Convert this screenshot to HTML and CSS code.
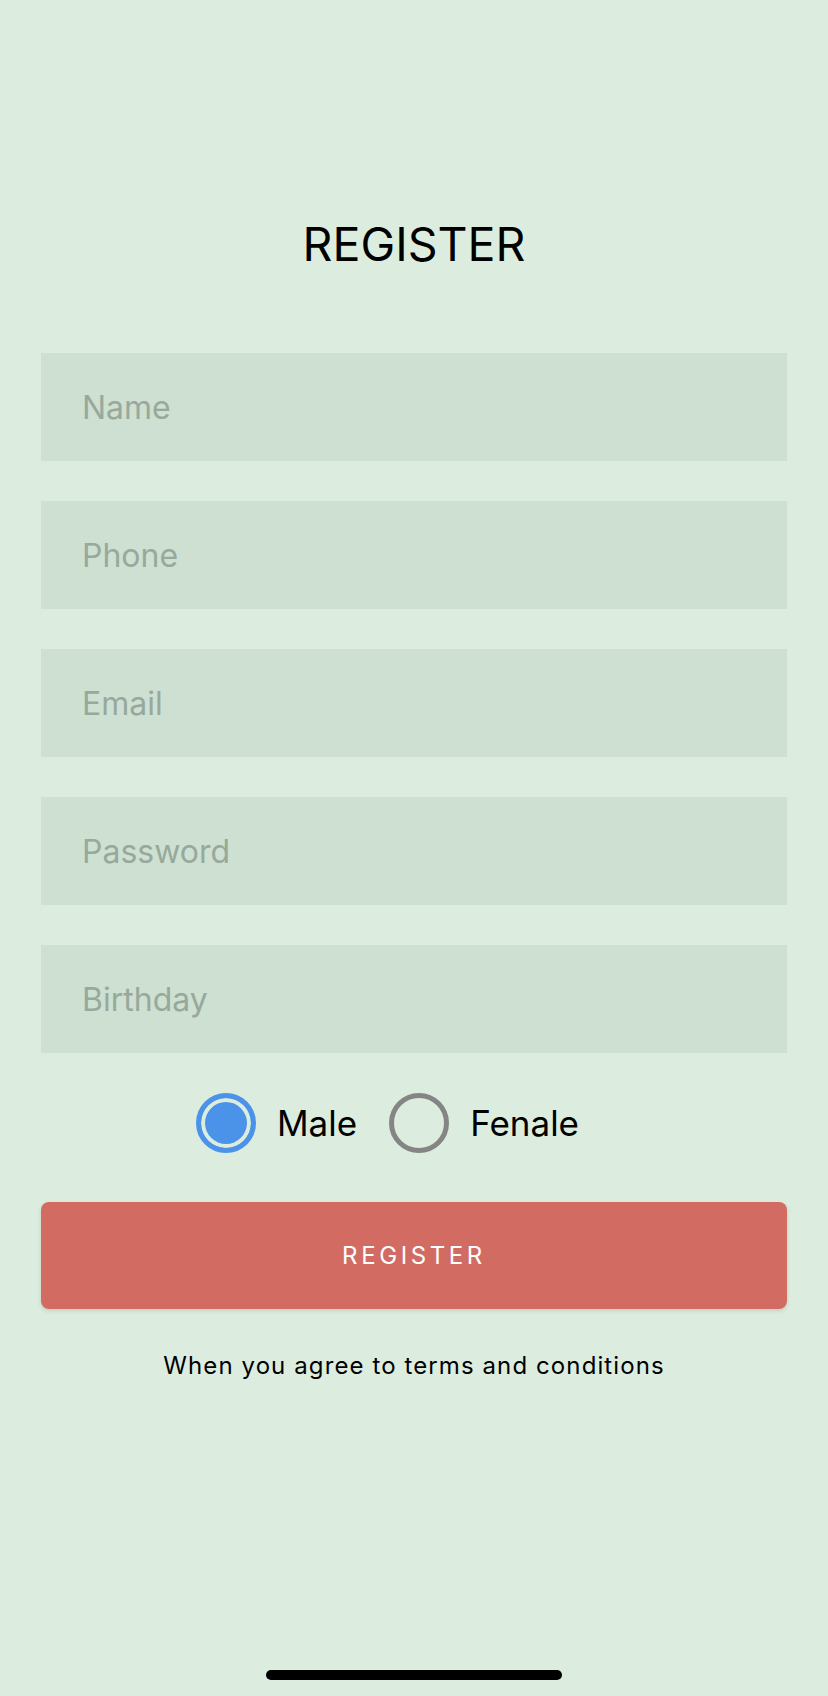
FILE: index.html
```html
<!DOCTYPE html>
<html lang="en">
<head>
<meta charset="utf-8">
<title>Register</title>
<link rel="stylesheet" href="styles.css">
</head>
<body>
<main class="screen">
  <h1 class="title">REGISTER</h1>
  <form class="form">
    <input class="field" type="text" placeholder="Name">
    <input class="field" type="text" placeholder="Phone">
    <input class="field" type="text" placeholder="Email">
    <input class="field" type="password" placeholder="Password">
    <input class="field" type="text" placeholder="Birthday">
    <div class="gender">
      <label class="option">
        <span class="radio radio-on"></span>
        <span class="option-label">Male</span>
      </label>
      <label class="option">
        <span class="radio"></span>
        <span class="option-label">Fenale</span>
      </label>
    </div>
    <button class="submit" type="button">REGISTER</button>
    <p class="terms">When you agree to terms and conditions</p>
  </form>
  <div class="home-indicator"></div>
</main>
</body>
</html>
```

FILE: styles.css
```css
* { box-sizing: border-box; }

html, body {
  margin: 0;
  padding: 0;
  background: #dcede0;
}

body {
  font-family: Inter, "Noto Sans", "Liberation Sans", sans-serif;
  color: #000;
}

.screen {
  width: 828px;
  height: 1696px;
  padding: 216px 41px 0;
  display: flex;
  flex-direction: column;
  position: relative;
}

.title {
  margin: 0;
  height: 56px;
  line-height: 56px;
  font-size: 46.5px;
  font-weight: 400;
  text-align: center;
}

.form {
  margin-top: 81px;
  display: flex;
  flex-direction: column;
}

.field {
  height: 108px;
  margin: 0 0 40px;
  padding: 0 41px;
  border: none;
  outline: none;
  background: #cde0d2;
  font-family: inherit;
  font-size: 32px;
  color: #333;
}

.field::placeholder {
  color: #98a99c;
}

.gender {
  height: 60px;
  display: flex;
  align-items: center;
  justify-content: center;
  padding-right: 53px;
}

.option {
  display: flex;
  align-items: center;
}

.option + .option {
  margin-left: 32px;
}

.radio {
  width: 60px;
  height: 60px;
  border-radius: 50%;
  border: 5px solid #858585;
}

.radio-on {
  border-color: #4b93e9;
  background: #4b93e9;
  box-shadow: inset 0 0 0 4px #dcede0;
}

.option-label {
  margin-left: 21px;
  font-size: 35px;
  line-height: 44px;
}

.submit {
  margin-top: 49px;
  height: 107px;
  border: none;
  border-radius: 8px;
  background: #d26c62;
  color: #fff;
  font-family: inherit;
  font-size: 24px;
  letter-spacing: 3.6px;
  box-shadow: 0 2px 4px rgba(0, 0, 0, 0.12);
}

.terms {
  margin: 42px 0 0;
  line-height: 30px;
  font-size: 24px;
  letter-spacing: 1.1px;
  text-align: center;
}

.home-indicator {
  position: absolute;
  left: 266px;
  top: 1670px;
  width: 296px;
  height: 10px;
  border-radius: 5px;
  background: #000;
}
```
